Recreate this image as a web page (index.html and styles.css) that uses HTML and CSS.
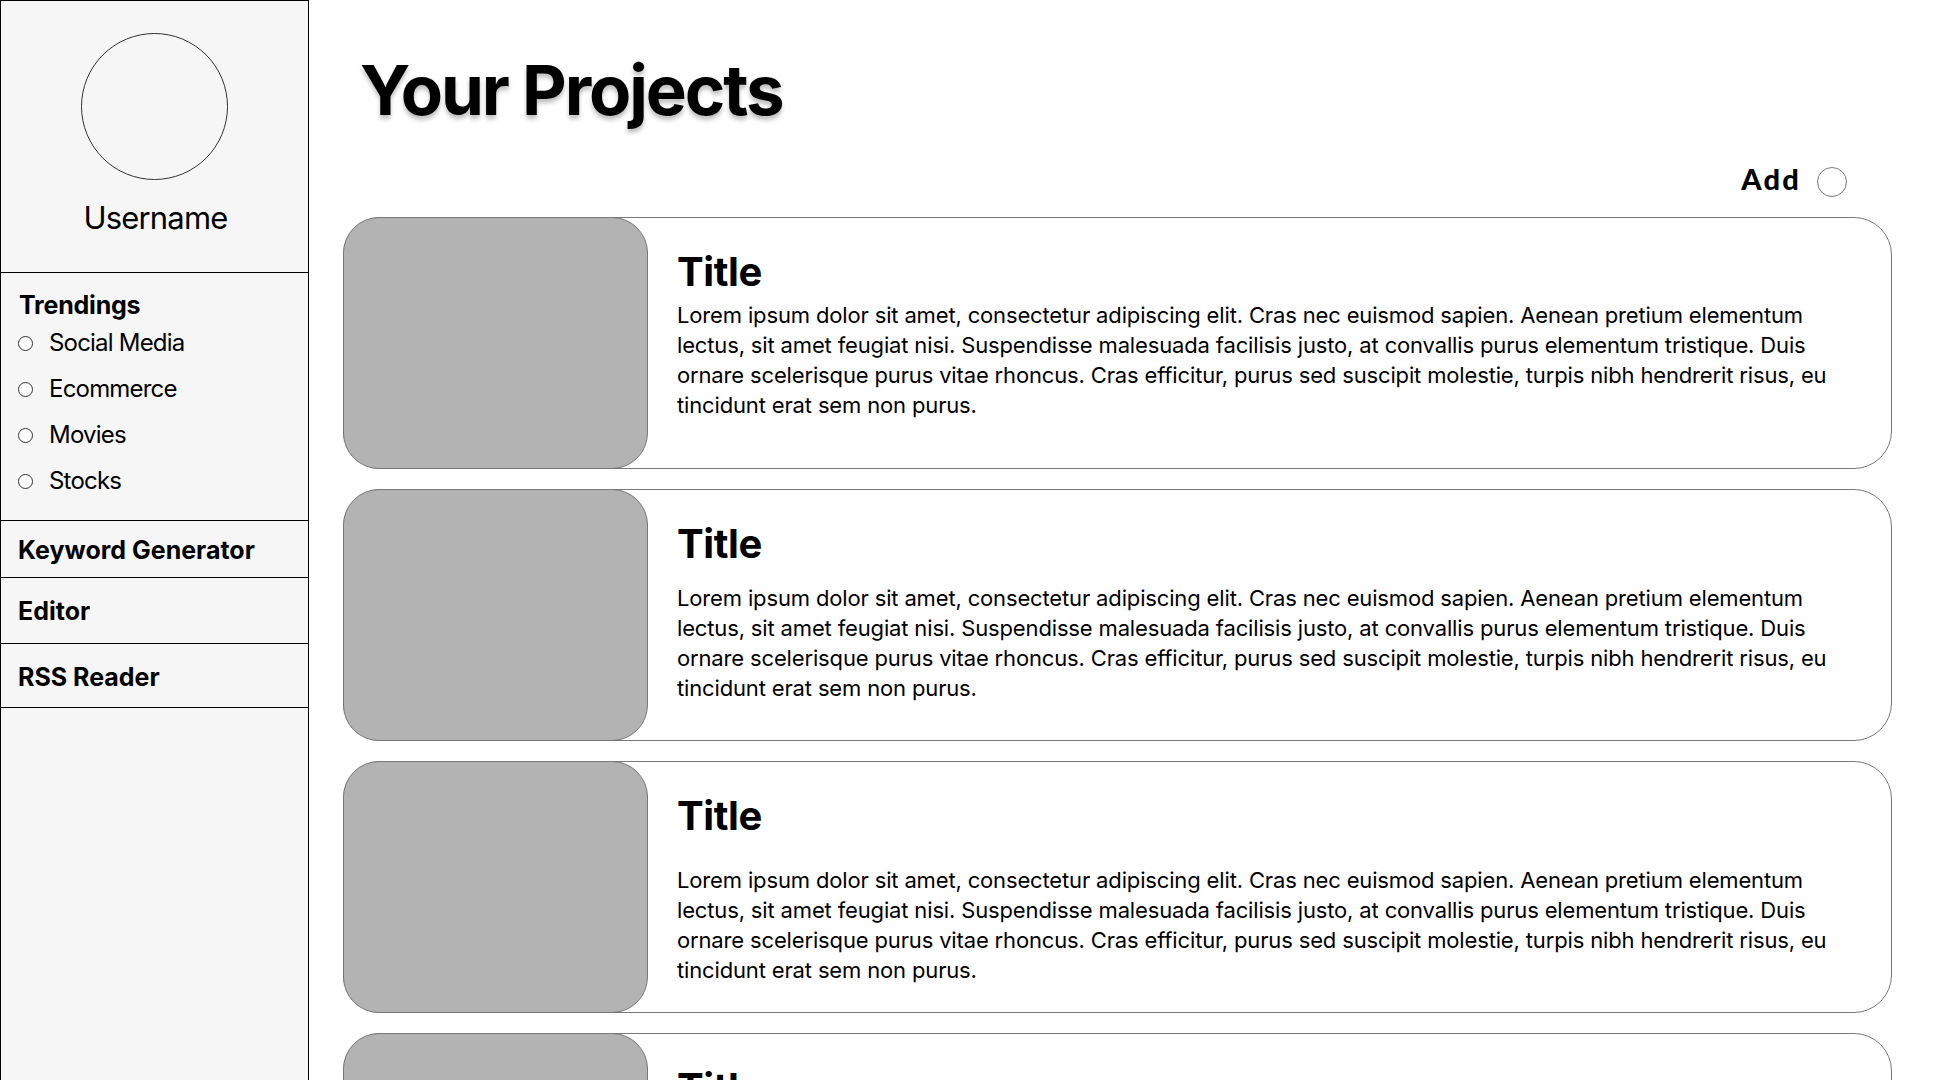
FILE: index.html
```html
<!DOCTYPE html>
<html lang="en">
<head>
<meta charset="utf-8">
<title>Your Projects</title>
<link rel="stylesheet" href="styles.css">
</head>
<body>
<aside class="sidebar">
  <section class="profile">
    <div class="avatar"></div>
    <div class="username">Username</div>
  </section>
  <section class="trendings">
    <h2 class="side-heading">Trendings</h2>
    <ul class="trend-list">
      <li class="trend-item"><span class="radio"></span>Social Media</li>
      <li class="trend-item"><span class="radio"></span>Ecommerce</li>
      <li class="trend-item"><span class="radio"></span>Movies</li>
      <li class="trend-item"><span class="radio"></span>Stocks</li>
    </ul>
  </section>
  <a class="side-link side-link--keyword">Keyword Generator</a>
  <a class="side-link side-link--editor">Editor</a>
  <a class="side-link side-link--rss">RSS Reader</a>
</aside>
<main class="main">
  <h1 class="page-title">Your Projects</h1>
  <div class="add-row">
    <span class="add-label">Add</span>
    <span class="add-circle"></span>
  </div>
  <div class="cards">
    <article class="card">
      <div class="card-image"></div>
      <div class="card-body">
        <h3 class="card-title">Title</h3>
        <p class="card-text">Lorem ipsum dolor sit amet, consectetur adipiscing elit. Cras nec euismod sapien. Aenean pretium elementum lectus, sit amet feugiat nisi. Suspendisse malesuada facilisis justo, at convallis purus elementum tristique. Duis ornare scelerisque purus vitae rhoncus. Cras efficitur, purus sed suscipit molestie, turpis nibh hendrerit risus, eu tincidunt erat sem non purus.</p>
      </div>
    </article>
    <article class="card card--b">
      <div class="card-image"></div>
      <div class="card-body">
        <h3 class="card-title">Title</h3>
        <p class="card-text">Lorem ipsum dolor sit amet, consectetur adipiscing elit. Cras nec euismod sapien. Aenean pretium elementum lectus, sit amet feugiat nisi. Suspendisse malesuada facilisis justo, at convallis purus elementum tristique. Duis ornare scelerisque purus vitae rhoncus. Cras efficitur, purus sed suscipit molestie, turpis nibh hendrerit risus, eu tincidunt erat sem non purus.</p>
      </div>
    </article>
    <article class="card card--c">
      <div class="card-image"></div>
      <div class="card-body">
        <h3 class="card-title">Title</h3>
        <p class="card-text">Lorem ipsum dolor sit amet, consectetur adipiscing elit. Cras nec euismod sapien. Aenean pretium elementum lectus, sit amet feugiat nisi. Suspendisse malesuada facilisis justo, at convallis purus elementum tristique. Duis ornare scelerisque purus vitae rhoncus. Cras efficitur, purus sed suscipit molestie, turpis nibh hendrerit risus, eu tincidunt erat sem non purus.</p>
      </div>
    </article>
    <article class="card">
      <div class="card-image"></div>
      <div class="card-body">
        <h3 class="card-title">Title</h3>
        <p class="card-text">Lorem ipsum dolor sit amet, consectetur adipiscing elit. Cras nec euismod sapien. Aenean pretium elementum lectus, sit amet feugiat nisi. Suspendisse malesuada facilisis justo, at convallis purus elementum tristique. Duis ornare scelerisque purus vitae rhoncus. Cras efficitur, purus sed suscipit molestie, turpis nibh hendrerit risus, eu tincidunt erat sem non purus.</p>
      </div>
    </article>
  </div>
</main>
</body>
</html>
```
FILE: styles.css
```css
* { box-sizing: border-box; }

html, body {
  margin: 0;
  padding: 0;
  background: #ffffff;
}

body {
  display: flex;
  align-items: stretch;
  font-family: Inter, "Liberation Sans", sans-serif;
  color: #000;
}

/* ---------- Sidebar ---------- */
.sidebar {
  width: 309px;
  flex: 0 0 309px;
  background: #f6f6f6;
  border: 1px solid #000;
  border-bottom: none;
  display: flex;
  flex-direction: column;
}

.profile {
  display: flex;
  flex-direction: column;
  align-items: center;
  padding: 32px 0 35px;
  border-bottom: 1px solid #000;
}

.avatar {
  width: 147px;
  height: 147px;
  border-radius: 50%;
  border: 1px solid #333;
  background: #f6f6f6;
}

.username {
  margin-top: 19px;
  font-size: 31px;
  line-height: 38px;
  font-weight: 400;
  letter-spacing: -0.8px;
  padding-left: 2px;
}

.trendings {
  padding: 17px 17px 16px;
  border-bottom: 1px solid #000;
}

.side-heading {
  margin: 0;
  font-size: 25px;
  line-height: 30px;
  font-weight: 700;
  letter-spacing: -0.2px;
  padding-left: 1px;
}

.trend-list {
  list-style: none;
  margin: 0;
  padding: 0;
}

.trend-item {
  display: flex;
  align-items: center;
  gap: 16px;
  font-size: 24px;
  line-height: 46px;
  height: 46px;
  font-weight: 400;
  letter-spacing: -0.8px;
}

.radio {
  width: 15px;
  height: 15px;
  flex: 0 0 15px;
  border-radius: 50%;
  border: 1px solid #333;
  background: #fff;
}

.side-link {
  display: block;
  font-size: 25px;
  line-height: 30px;
  font-weight: 700;
  letter-spacing: 0;
  padding: 0 17px;
  border-bottom: 1px solid #000;
}

.side-link--keyword { padding-top: 14px; padding-bottom: 12px; }
.side-link--editor { padding-top: 18px; padding-bottom: 17px; }
.side-link--rss { padding-top: 18px; padding-bottom: 15px; }

/* ---------- Main ---------- */
.main {
  flex: 1;
  padding: 48px 46px 40px 34px;
}

.page-title {
  margin: 0;
  padding-left: 17px;
  font-size: 69px;
  line-height: 84px;
  font-weight: 700;
  letter-spacing: -2.1px;
  text-shadow: 0 4px 4px rgba(0, 0, 0, 0.25);
}

.add-row {
  display: flex;
  justify-content: flex-end;
  align-items: center;
  gap: 16px;
  margin-top: 35px;
  padding-right: 45px;
  height: 30px;
}

.add-label {
  font-family: Lato, "Liberation Sans", sans-serif;
  font-weight: 900;
  font-size: 29px;
  letter-spacing: 2.2px;
  line-height: 30px;
  padding-bottom: 7px;
}

.add-circle {
  width: 30px;
  height: 30px;
  border-radius: 50%;
  border: 1px solid #777;
  background: #fff;
}

.cards {
  margin-top: 20px;
  display: flex;
  flex-direction: column;
  gap: 20px;
}

.card {
  display: flex;
  height: 252px;
  border: 1px solid #777;
  border-radius: 38px;
  background: #fff;
}

.card-image {
  flex: 0 0 305px;
  margin: -1px 0 -1px -1px;
  background: #b3b3b3;
  border: 1px solid #777;
  border-radius: 36px;
}

.card-body {
  flex: 1;
  padding: 30px 50px 0 29px;
}

.card-title {
  margin: 0;
  font-size: 40px;
  line-height: 48px;
  font-weight: 700;
  letter-spacing: -0.4px;
}

.card-text {
  margin: 4px 0 0;
  font-size: 22px;
  line-height: 30px;
  font-weight: 400;
  letter-spacing: -0.15px;
}

.card--b .card-text { margin-top: 15px; }
.card--c .card-text { margin-top: 25px; }
```
